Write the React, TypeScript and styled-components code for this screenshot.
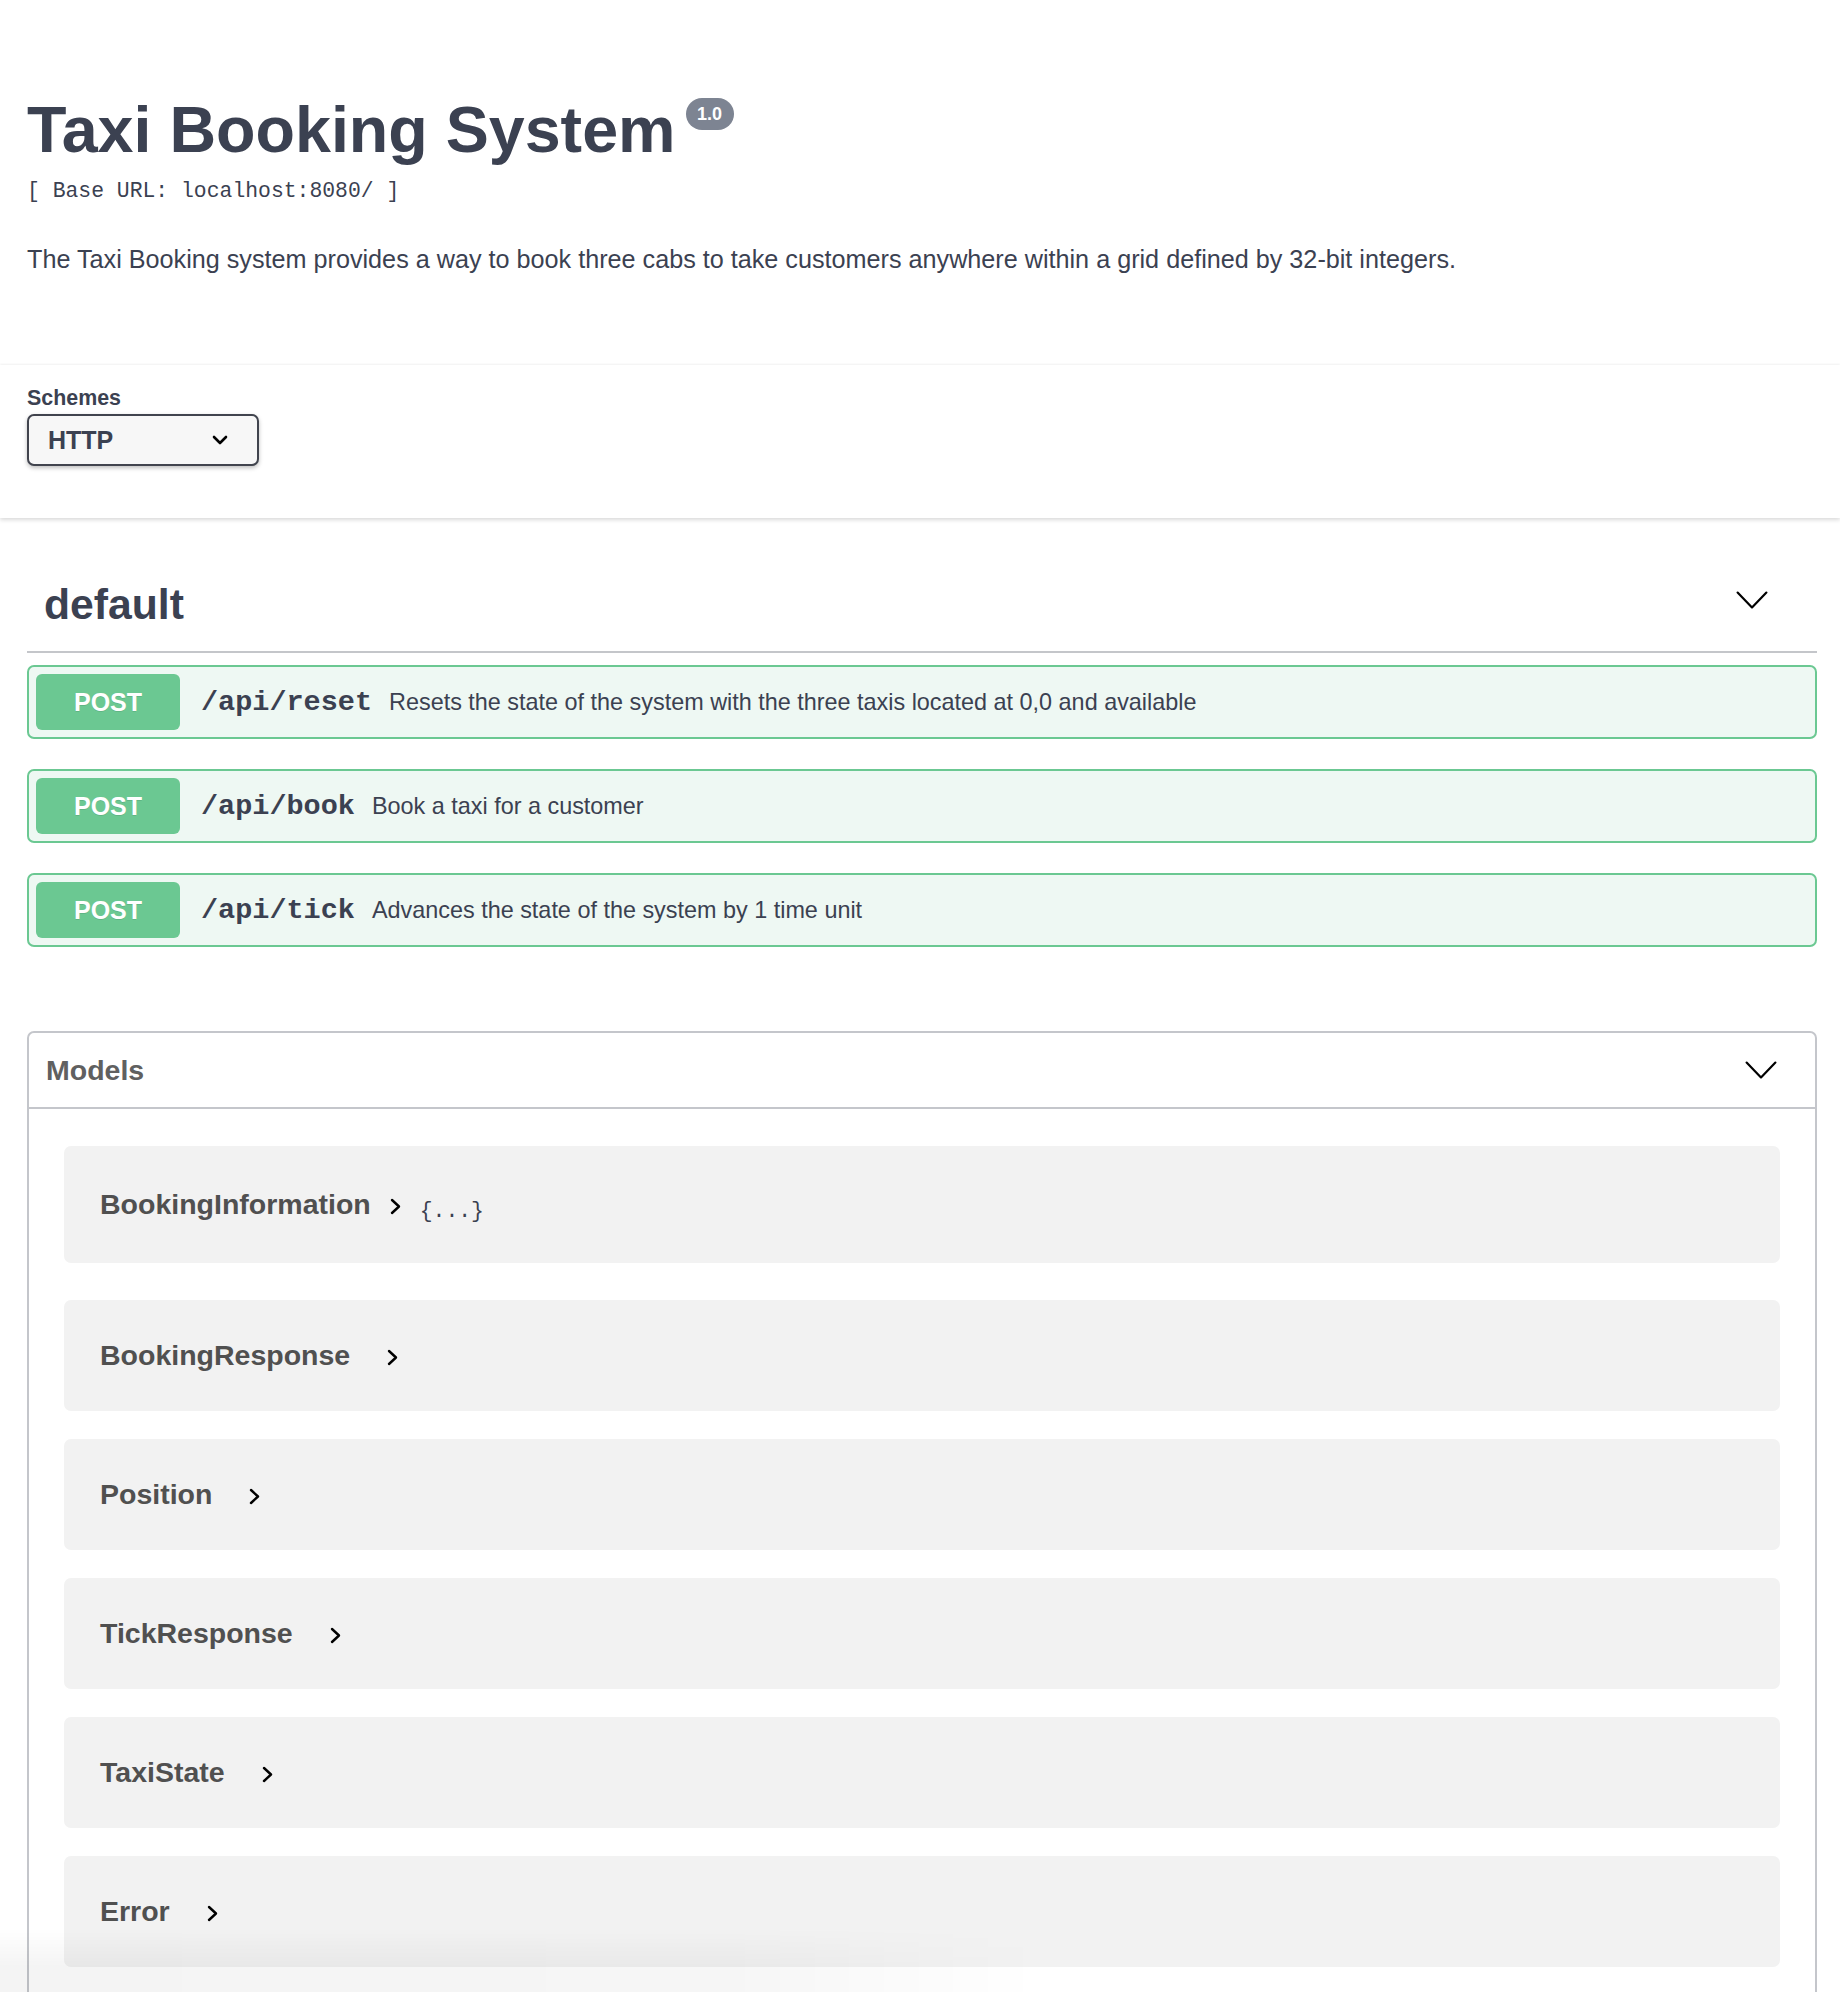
import React from 'react';
import styled, { createGlobalStyle } from 'styled-components';

const GlobalStyle = createGlobalStyle`
  html, body { margin: 0; padding: 0; background: #fff; }
  body {
    font-family: "Liberation Sans", Helvetica, Arial, sans-serif;
    color: #3b4151;
    -webkit-font-smoothing: antialiased;
  }
  * { box-sizing: border-box; }
`;

const Page = styled.div`
  position: relative;
  min-height: 1992px;
  overflow: hidden;
`;

const Inner = styled.div`
  padding: 0 23px 0 27px;
`;

const Info = styled.section`
  padding-top: 94px;
  padding-bottom: 88px;
`;

const Title = styled.h2`
  display: flex;
  align-items: flex-start;
  margin: 0;
  font-size: 64.6px;
  line-height: 72px;
  font-weight: 700;
  color: #3b4151;
`;

const VersionBadge = styled.span`
  display: inline-flex;
  align-items: center;
  justify-content: center;
  width: 48px;
  height: 32px;
  margin: 4px 0 0 10px;
  border-radius: 16px;
  background: #7d8492;
  color: #fff;
  font-size: 18px;
  line-height: 1;
  font-weight: 700;
`;

const BaseUrl = styled.pre`
  margin: 12px 0 0;
  font-family: "Liberation Mono", "Courier New", monospace;
  font-size: 21.4px;
  line-height: 26px;
  color: #3b4151;
`;

const Description = styled.p`
  margin: 37px 0 0;
  font-size: 25.2px;
  line-height: 36px;
  color: #3b4151;
`;

const SchemeContainer = styled.section`
  background: #fff;
  box-shadow: 0 2px 4px 0 rgba(0, 0, 0, 0.15), 0 -1px 2px 0 rgba(0, 0, 0, 0.04);
  padding: 21px 23px 52px 27px;
`;

const SchemeLabel = styled.span`
  display: block;
  font-size: 21.4px;
  line-height: 24px;
  font-weight: 700;
  color: #3b4151;
`;

const SchemeSelect = styled.div`
  margin-top: 4px;
  width: 232px;
  height: 52px;
  border: 2px solid #41444e;
  border-radius: 7px;
  background: #f7f7f7;
  box-shadow: 0 2px 4px 0 rgba(0, 0, 0, 0.25);
  display: flex;
  align-items: center;
  justify-content: space-between;
  padding: 0 29px 0 19px;
  font-size: 25px;
  font-weight: 700;
  color: #3b4151;
`;

const TagHeader = styled.div`
  margin-top: 61px;
  display: flex;
  align-items: center;
  justify-content: space-between;
  padding: 0 49px 22px 17px;
  border-bottom: 2px solid rgba(59, 65, 81, 0.3);
`;

const TagName = styled.h3`
  margin: 0;
  font-size: 42.7px;
  line-height: 50px;
  font-weight: 700;
  color: #3b4151;
`;

const BigChevron = styled.svg<{ $lift: number }>`
  display: block;
  margin-bottom: ${(p) => p.$lift}px;
`;

const OpList = styled.div`
  padding-top: 12px;
  display: flex;
  flex-direction: column;
  gap: 30px;
`;

const OpBlock = styled.div`
  display: flex;
  align-items: center;
  height: 74px;
  padding: 7px;
  border: 2px solid #6bc892;
  border-radius: 7px;
  background: #eef8f3;
`;

const MethodBadge = styled.span`
  display: flex;
  align-items: center;
  justify-content: center;
  flex: 0 0 144px;
  height: 56px;
  border-radius: 6px;
  background: #6bc892;
  color: #fff;
  font-size: 25px;
  font-weight: 700;
  text-shadow: 0 1px 0 rgba(0, 0, 0, 0.1);
`;

const OpPath = styled.span`
  margin-left: 21px;
  padding-right: 17px;
  font-family: "Liberation Mono", "Courier New", monospace;
  font-size: 28.5px;
  font-weight: 700;
  color: #3b4151;
`;

const OpDesc = styled.span`
  font-size: 23.4px;
  color: #3b4151;
`;

const ModelsSection = styled.section`
  margin-top: 84px;
  border: 2px solid #c4c6cb;
  border-radius: 7px;
`;

const ModelsHeader = styled.div`
  height: 76px;
  display: flex;
  align-items: center;
  justify-content: space-between;
  padding: 0 38px 0 17px;
  border-bottom: 2px solid #c4c6cb;
`;

const ModelsTitle = styled.h4`
  margin: 0;
  font-size: 28.5px;
  font-weight: 700;
  color: #606060;
`;

const ModelsBody = styled.div`
  padding: 37px 35px 60px;
`;

const ModelContainer = styled.div<{ $tall?: boolean }>`
  display: flex;
  align-items: center;
  height: ${(p) => (p.$tall ? 117 : 111)}px;
  margin-bottom: ${(p) => (p.$tall ? 37 : 28)}px;
  padding-left: 36px;
  border-radius: 7px;
  background: #f2f2f2;
`;

const ModelTitle = styled.span`
  font-size: 28.5px;
  font-weight: 700;
  color: #505050;
`;

const Toggle = styled.svg<{ $near?: boolean }>`
  display: block;
  margin-left: ${(p) => (p.$near ? 19 : 37)}px;
  margin-top: 4px;
`;

const Brace = styled.span`
  margin-left: 19px;
  margin-top: 12px;
  font-family: "Liberation Mono", "Courier New", monospace;
  font-size: 21.4px;
  color: #3b4151;
`;

const BottomShade = styled.div`
  position: absolute;
  left: 0;
  top: 1928px;
  width: 1040px;
  height: 64px;
  pointer-events: none;
  background: linear-gradient(to right, rgba(0, 0, 0, 0.045) 0%, rgba(0, 0, 0, 0.035) 70%, rgba(0, 0, 0, 0) 100%);
  -webkit-mask-image: linear-gradient(to bottom, transparent 0%, #000 60%);
  mask-image: linear-gradient(to bottom, transparent 0%, #000 60%);
`;

const ChevronDown = ({ lift = 0 }: { lift?: number }) => {
  const w = 32;
  const h = 18;
  const sw = 2.2;
  return (
    <BigChevron $lift={lift} width={w} height={h} viewBox={`0 0 ${w} ${h}`} fill="none">
      <polyline
        points={`${sw / 2 + 0.5},${sw / 2 + 0.5} ${w / 2},${h - sw / 2 - 0.5} ${w - sw / 2 - 0.5},${sw / 2 + 0.5}`}
        stroke="#000"
        strokeWidth={sw}
        strokeLinecap="round"
        strokeLinejoin="round"
      />
    </BigChevron>
  );
};

const SmallChevron = () => (
  <svg width="16" height="10" viewBox="0 0 16 10" fill="none">
    <polyline points="2,2 8,8 14,2" stroke="#000" strokeWidth="2.6" strokeLinecap="round" strokeLinejoin="round" />
  </svg>
);

const RightChevron = ({ near }: { near?: boolean }) => (
  <Toggle $near={near} width="11" height="17" viewBox="0 0 11 17" fill="none">
    <polyline points="2,2 9,8.5 2,15" stroke="#000" strokeWidth="2.4" strokeLinecap="round" strokeLinejoin="round" />
  </Toggle>
);

const ops = [
  { path: '/api/reset', desc: 'Resets the state of the system with the three taxis located at 0,0 and available' },
  { path: '/api/book', desc: 'Book a taxi for a customer' },
  { path: '/api/tick', desc: 'Advances the state of the system by 1 time unit' },
];

const models = ['BookingInformation', 'BookingResponse', 'Position', 'TickResponse', 'TaxiState', 'Error'];

export default function App() {
  return (
    <Page>
      <GlobalStyle />
      <Inner>
        <Info>
          <Title>
            Taxi Booking System
            <VersionBadge>1.0</VersionBadge>
          </Title>
          <BaseUrl>[ Base URL: localhost:8080/ ]</BaseUrl>
          <Description>
            The Taxi Booking system provides a way to book three cabs to take customers anywhere within a grid defined by 32-bit integers.
          </Description>
        </Info>
      </Inner>
      <SchemeContainer>
        <SchemeLabel>Schemes</SchemeLabel>
        <SchemeSelect role="listbox">
          <span>HTTP</span>
          <SmallChevron />
        </SchemeSelect>
      </SchemeContainer>
      <Inner>
        <TagHeader>
          <TagName>default</TagName>
          <ChevronDown lift={8} />
        </TagHeader>
        <OpList>
          {ops.map((op) => (
            <OpBlock key={op.path}>
              <MethodBadge>POST</MethodBadge>
              <OpPath>{op.path}</OpPath>
              <OpDesc>{op.desc}</OpDesc>
            </OpBlock>
          ))}
        </OpList>
        <ModelsSection>
          <ModelsHeader>
            <ModelsTitle>Models</ModelsTitle>
            <ChevronDown />
          </ModelsHeader>
          <ModelsBody>
            {models.map((m, i) => (
              <ModelContainer key={m} $tall={i === 0}>
                <ModelTitle>{m}</ModelTitle>
                <RightChevron near={i === 0} />
                {i === 0 && <Brace>{'{...}'}</Brace>}
              </ModelContainer>
            ))}
          </ModelsBody>
        </ModelsSection>
      </Inner>
      <BottomShade />
    </Page>
  );
}
